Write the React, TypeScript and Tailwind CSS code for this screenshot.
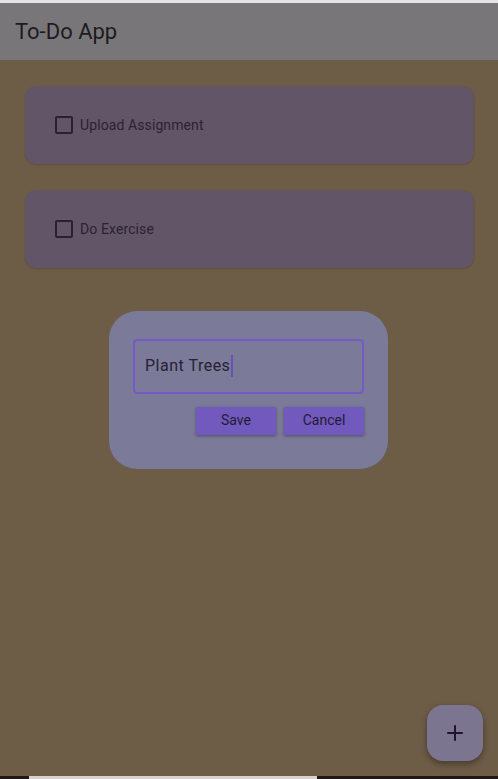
import { Plus } from "lucide-react";

type Todo = { id: number; title: string; done: boolean };

const todos: Todo[] = [
  { id: 1, title: "Upload Assignment", done: false },
  { id: 2, title: "Do Exercise", done: false },
];

function TodoCard({ todo }: { todo: Todo }) {
  return (
    <div className="flex h-[78px] items-center rounded-xl bg-[#635568] px-[30px] shadow-[0_1px_2px_rgba(0,0,0,0.15)]">
      <span className="h-[18px] w-[18px] rounded-[2px] border-2 border-[#2a2030]" />
      <span className="ml-[7px] text-[14px] tracking-[0.1px] text-[#2a2330]">{todo.title}</span>
    </div>
  );
}

export default function App() {
  return (
    <div
      className="relative flex h-[779px] w-full flex-col overflow-hidden bg-[#6d5c46]"
      style={{ fontFamily: "Roboto, 'Liberation Sans', sans-serif" }}
    >
      <div className="h-[3px] bg-[#e6e3e6]" />
      <header className="flex h-[57px] items-center bg-[#79767a] px-[15px]">
        <h1 className="text-[22px] text-[#1d1b20]">To-Do App</h1>
      </header>

      <main className="flex flex-1 flex-col gap-[26px] pl-[25px] pr-[24px] pt-[26px]">
        {todos.map((t) => (
          <TodoCard key={t.id} todo={t} />
        ))}
      </main>

      <div className="flex h-[3px] bg-[#1e1816]">
        <div className="ml-[29px] w-[288px] bg-[#d6d2ce]" />
      </div>

      <div className="absolute inset-0 flex items-center justify-center pr-[1px]">
        <div className="w-[279px] rounded-[28px] bg-[#7b7a98] pb-[34px] pl-[24px] pr-[24px] pt-[28px]">
          <div className="flex h-[55px] items-center rounded-[4px] border-2 border-[#7659c6] px-[10px]">
            <span className="text-[16px] tracking-[0.5px] text-[#262233]">Plant Trees</span>
            <span className="ml-[1px] h-[22px] w-[2px] bg-[#6a4fb8]" />
          </div>
          <div className="mt-[13px] flex justify-end gap-[8px]">
            <button className="h-[28px] w-[80px] bg-[#7259bd] text-[14px] text-[#221c33] shadow-[0_1px_3px_rgba(0,0,0,0.35)]">
              Save
            </button>
            <button className="h-[28px] w-[80px] bg-[#7259bd] text-[14px] text-[#221c33] shadow-[0_1px_3px_rgba(0,0,0,0.35)]">
              Cancel
            </button>
          </div>
        </div>
      </div>

      <button className="absolute right-[15px] top-[705px] flex h-[56px] w-[56px] items-center justify-center rounded-2xl bg-[#7c7590] shadow-[0_3px_6px_rgba(0,0,0,0.35)]">
        <Plus size={24} strokeWidth={2} color="#1d1530" />
      </button>
    </div>
  );
}
